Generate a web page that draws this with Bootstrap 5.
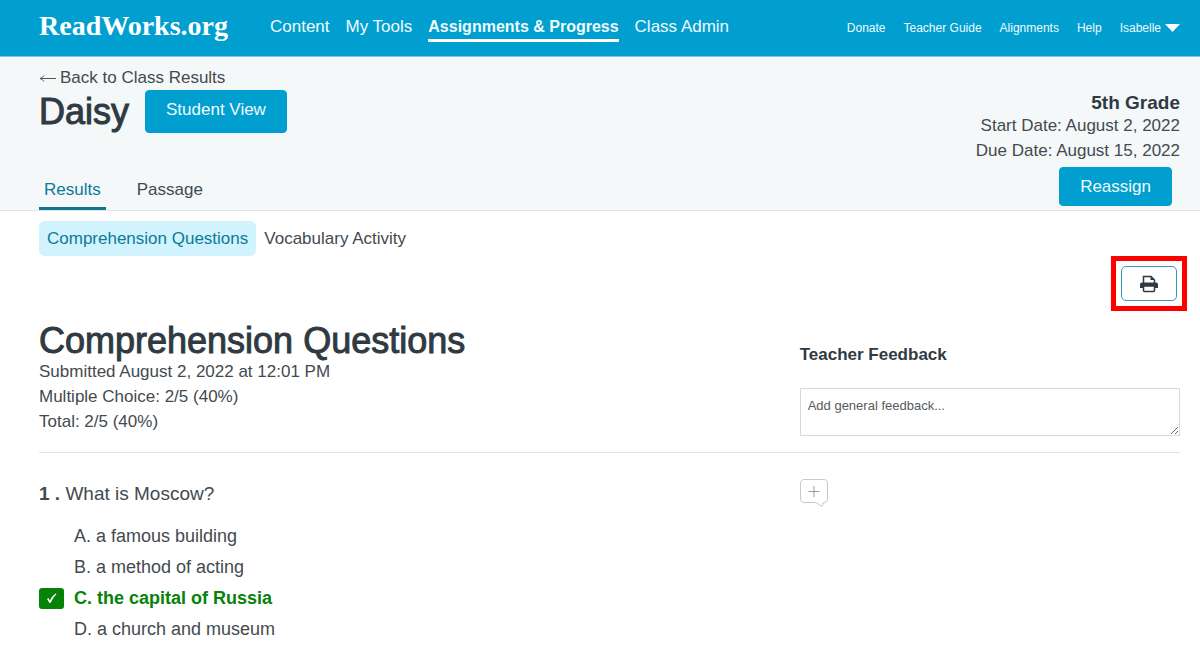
<!DOCTYPE html>
<html lang="en">
<head>
<meta charset="utf-8">
<meta name="viewport" content="width=device-width, initial-scale=1">
<title>Daisy - Class Results - ReadWorks.org</title>
<link href="https://cdn.jsdelivr.net/npm/bootstrap@5.3.0/dist/css/bootstrap.min.css" rel="stylesheet">
<style>
:root{--rw-blue:#009fcf;--rw-teal:#0d7a96;--rw-ink:#444a4f;--rw-dark:#303a42}
body{font-family:"Liberation Sans",Arial,sans-serif;font-size:17px;line-height:25px;color:var(--rw-ink);overflow-x:hidden}
a{color:inherit;text-decoration:none}
.page-x{padding-left:39px;padding-right:20px}
.topbar{background:var(--rw-blue);min-height:57px;color:#effbff;border-bottom:1px solid #7cc8e2}
.logo{font-family:"Liberation Serif",serif;font-weight:700;font-size:28px;line-height:48px;padding-bottom:4px;color:#fff;width:231px}
.main-links{gap:16px;line-height:24px}
.main-links a{border-bottom:3px solid transparent}
.main-links .current{font-size:16px;font-weight:700;border-color:#fff;border-radius:1px}
.side-links{gap:18px;font-size:12px;line-height:20px}
.side-links button{font-size:12px;line-height:20px;color:inherit}
.subheader{background:#f4f8f9;border-bottom:1px solid #dfe3e4}
.title-lg{font-size:36px;line-height:36px;font-weight:400;color:var(--rw-dark);margin:0;-webkit-text-stroke:1px var(--rw-dark)}
.btn-rw{--bs-btn-bg:var(--rw-blue);--bs-btn-color:#effbff;--bs-btn-border-color:var(--rw-blue);--bs-btn-hover-bg:#008bb5;--bs-btn-hover-color:#fff;--bs-btn-border-radius:4px;font-size:17px;line-height:25px;padding:6px 20px}
.btn-tall{padding-bottom:10px}
.tabs-line{gap:26px}
.tabs-line a{padding:0 5px 5px;border-bottom:3px solid transparent}
.tabs-line .current{color:var(--rw-teal);border-color:#11758f}
.grade{font-size:19px;line-height:20px;color:var(--rw-dark);padding-top:36px}
.section-links{padding-top:10px}
.pill{padding:5px 8px;border-radius:6px}
.pill.current{background:#d0f3fe;color:var(--rw-teal)}
.print-frame{border:5px solid #f00;padding:5px;margin-right:-7px}
.print-btn{width:56px;height:35px;border:1px solid #3399b8;border-radius:5px;background:#fff;padding:0}
.summary{padding-top:12px}
.feedback{padding-top:32px}
.feedback-label{line-height:24px;margin-bottom:21px;color:var(--rw-dark)}
.feedback-box{font-size:13px;line-height:18px;height:48px;min-height:48px;padding:8px 7px;border:1px solid #d5d9da;border-radius:0}
.feedback-box::placeholder{color:#555b60}
.divider{border-color:#e2e4e5;opacity:1;margin:0}
.question-row{padding-top:25px}
.question{font-size:19px;line-height:32px}
.answers{font-size:18px;line-height:31px;margin-top:11px}
.answers li{gap:10px}
.tick{width:25px;height:21px;background:#068306;border-radius:3px}
.right-answer{color:#068306;font-weight:700}
.slot{width:25px}
</style>
</head>
<body>
<nav class="topbar page-x d-flex align-items-center justify-content-between" aria-label="Main">
  <div class="d-flex align-items-center">
    <a class="logo" href="#">ReadWorks.org</a>
    <div class="main-links d-flex">
      <a href="#">Content</a>
      <a href="#">My Tools</a>
      <a class="current" href="#" aria-current="page">Assignments &amp; Progress</a>
      <a href="#">Class Admin</a>
    </div>
  </div>
  <div class="side-links d-flex align-items-center">
    <a href="#">Donate</a>
    <a href="#">Teacher Guide</a>
    <a href="#">Alignments</a>
    <a href="#">Help</a>
    <button type="button" class="border-0 bg-transparent p-0 d-flex align-items-center">Isabelle
      <svg class="ms-1" width="15" height="8" viewBox="0 0 15 8" aria-hidden="true"><path d="M0 0H15L7.500 8Z" fill="#fff"/></svg>
    </button>
  </div>
</nav>

<header class="subheader page-x d-flex justify-content-between">
  <div class="d-flex flex-column justify-content-between">
    <div class="pt-2">
      <a class="d-flex align-items-center" href="#">
        <svg class="me-1" width="17" height="10" viewBox="0 0 17 10" fill="none" stroke="#50565a" aria-hidden="true"><path d="M1 5.500H17M5 2.500Q3.500 5 1 5.500Q3.500 6 5 8.500"/></svg>Back to Class Results</a>
      <div class="d-flex align-items-center gap-3">
        <h1 class="title-lg">Daisy</h1>
        <button type="button" class="btn btn-rw btn-tall">Student View</button>
      </div>
    </div>
    <div class="tabs-line d-flex">
      <a class="current" href="#" aria-current="page">Results</a>
      <a href="#">Passage</a>
    </div>
  </div>
  <div class="text-end">
    <div class="grade fw-bold">5th Grade</div>
    <div>Start Date: August 2, 2022</div>
    <div>Due Date: August 15, 2022</div>
    <button type="button" class="btn btn-rw me-2 mt-1 mb-1">Reassign</button>
  </div>
</header>

<main class="page-x">
  <div class="section-links d-flex">
    <a class="pill current" href="#" aria-current="page">Comprehension Questions</a>
    <a class="pill" href="#">Vocabulary Activity</a>
  </div>
  <div class="d-flex justify-content-end">
    <div class="print-frame">
      <button type="button" class="print-btn d-flex align-items-center justify-content-center" aria-label="Print">
        <svg width="18" height="18" viewBox="0 0 18 18" aria-hidden="true">
          <path d="M3.500 8V1.500H11L14.500 5V8" fill="#fff" stroke="#303a42" stroke-width="1.500"/>
          <path d="M10.500 1.500V5H14.500Z" fill="#303a42"/>
          <path d="M2 7.500H16Q18 7.500 18 9.500V13H0V9.500Q0 7.500 2 7.500Z" fill="#303a42"/>
          <rect x="3.500" y="11" width="11" height="5.500" rx="1" fill="#fff" stroke="#303a42" stroke-width="1.500"/>
        </svg>
      </button>
    </div>
  </div>

  <section class="row g-0 pb-3">
    <div class="summary col-8">
      <h2 class="title-lg">Comprehension Questions</h2>
      <div>Submitted August 2, 2022 at 12:01 PM</div>
      <div>Multiple Choice: 2/5 (40%)</div>
      <div>Total: 2/5 (40%)</div>
    </div>
    <div class="feedback col-4 d-flex flex-column">
      <label class="feedback-label fw-bold" for="feedback">Teacher Feedback</label>
      <textarea id="feedback" class="feedback-box form-control" placeholder="Add general feedback..."></textarea>
    </div>
  </section>
  <hr class="divider">

  <section class="question-row row g-0">
    <div class="col-8">
      <div class="question"><b>1 .</b> What is Moscow?</div>
      <ul class="answers list-unstyled mb-0">
        <li class="d-flex"><span class="slot"></span>A. a famous building</li>
        <li class="d-flex"><span class="slot"></span>B. a method of acting</li>
        <li class="d-flex align-items-center right-answer"><span class="tick d-flex align-items-center justify-content-center"><svg width="11" height="11" viewBox="0 0 11 11" aria-label="Correct"><path d="M1 6L2.500 5L4 7.500Q6 3 9.500 .5L10.500 1Q7 4.500 4.500 10H3.500Z" fill="#fff"/></svg></span>C. the capital of Russia</li>
        <li class="d-flex"><span class="slot"></span>D. a church and museum</li>
      </ul>
    </div>
    <div class="col-4">
      <button type="button" class="border-0 bg-transparent p-0 d-block" aria-label="Add comment">
        <svg width="28" height="29" viewBox="0 0 28 29" fill="none" aria-hidden="true">
          <path d="M4 1.500H24Q27.500 1.500 27.500 5V21Q27.500 24.500 24 24.500H23.500L22 28.500L16 24.500H4Q.5 24.500 .5 21V5Q.5 1.500 4 1.500Z" stroke="#c8cbcc"/>
          <path d="M8.500 13.500H19.500M14 8V19" stroke="#999da0"/>
        </svg>
      </button>
    </div>
  </section>
</main>
<script src="https://cdn.jsdelivr.net/npm/bootstrap@5.3.0/dist/js/bootstrap.bundle.min.js"></script>
</body>
</html>
